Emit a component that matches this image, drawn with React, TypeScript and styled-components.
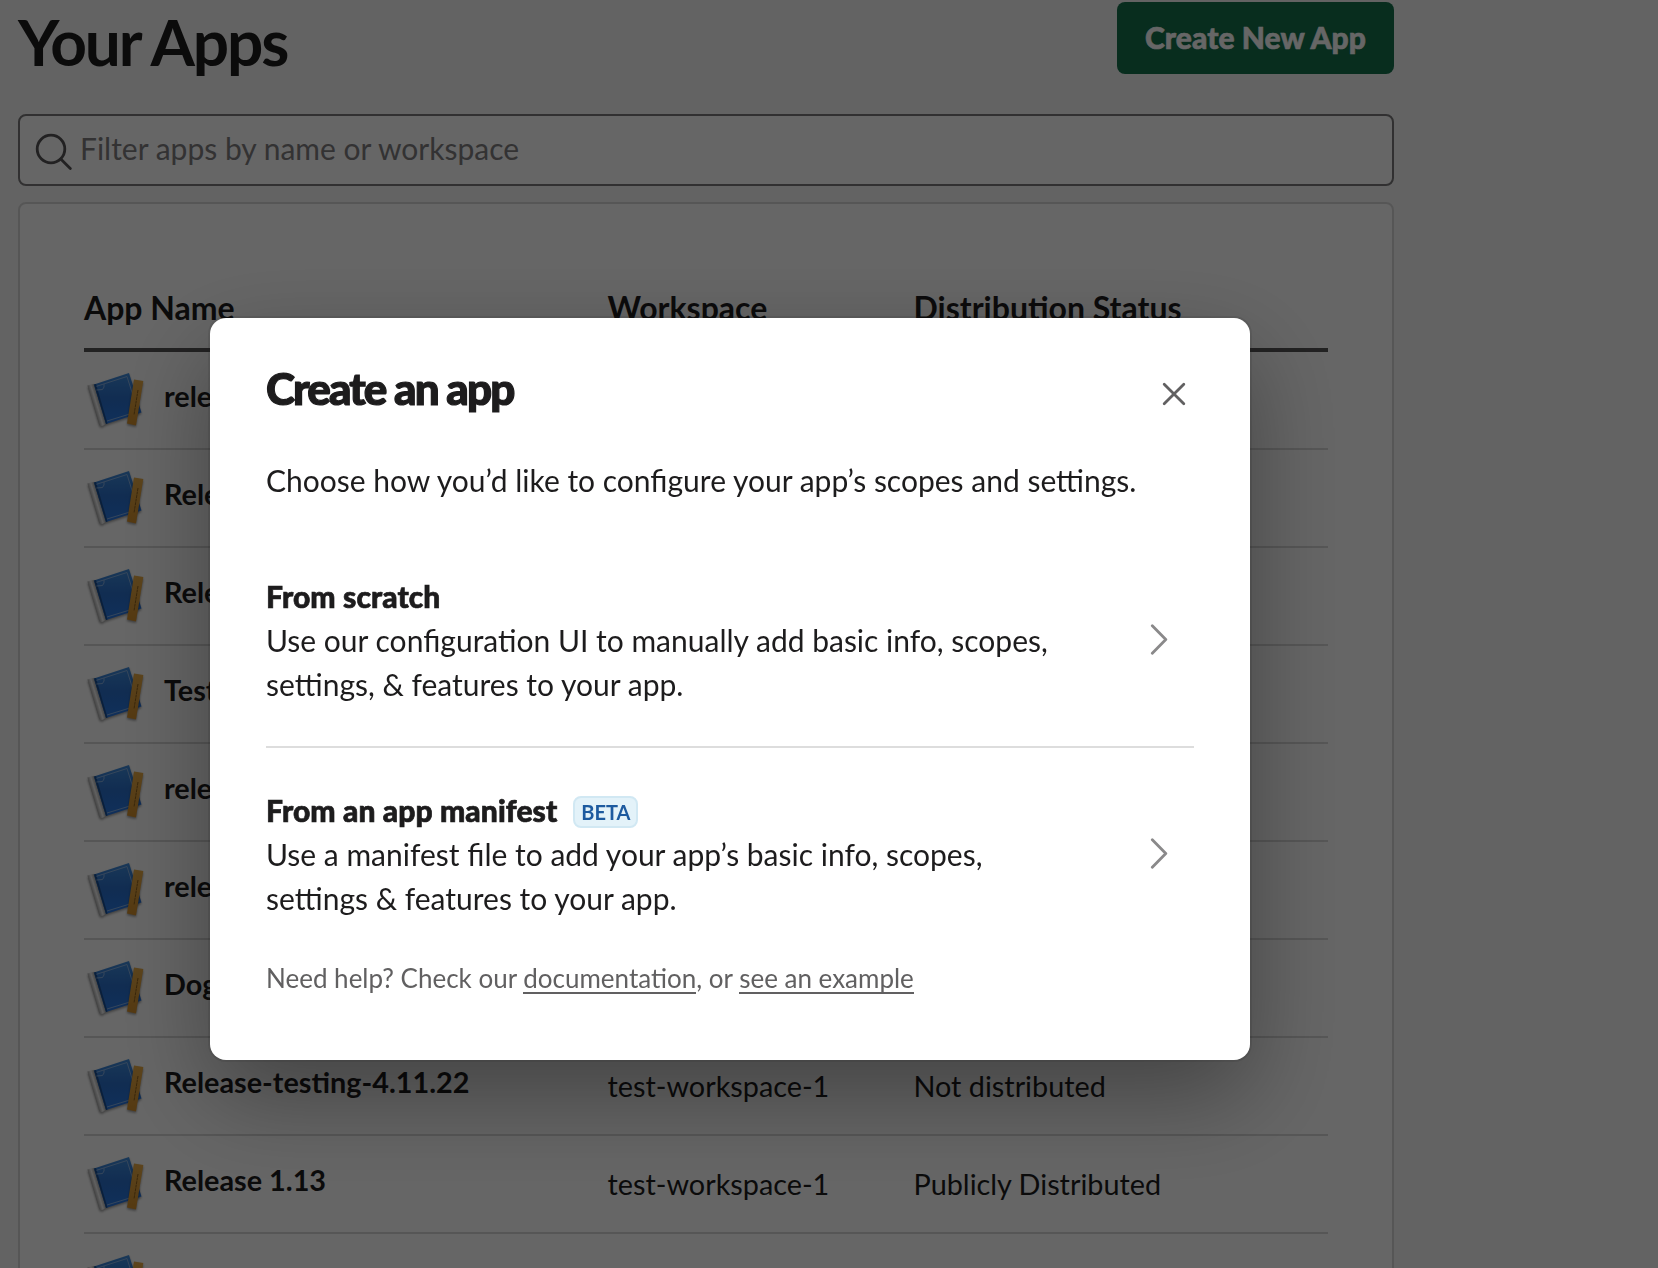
import React from "react";
import styled, { createGlobalStyle } from "styled-components";

const GlobalStyle = createGlobalStyle`
  *, *::before, *::after { box-sizing: border-box; }
  html, body { margin: 0; height: 100%; overflow: hidden; }
  body {
    background: #f8f8f8;
    color: #1d1c1d;
    font-family: Lato, "Liberation Sans", sans-serif;
    font-size: 30px;
    line-height: 44px;
  }
`;

const Page = styled.main`
  width: 1394px;
  height: 1268px;
  overflow: hidden;
  padding: 2px 0 0 18px;
`;

const Header = styled.header`
  display: flex;
  justify-content: space-between;
  align-items: flex-start;
  height: 112px;
`;

const Title = styled.h1`
  margin: 1px 0 0;
  font-size: 64px;
  line-height: 78px;
  font-weight: 700;
  letter-spacing: -2.1px;
`;

const PrimaryButton = styled.button`
  width: 277px;
  height: 72px;
  padding: 0 0 2px;
  border: 0;
  border-radius: 8px;
  background: #14704c;
  color: #fff;
  font: 900 30px Lato, sans-serif;
  letter-spacing: 0.07px;
  -webkit-text-stroke: 0.6px currentColor;
  white-space: nowrap;
`;

const SearchBox = styled.div`
  display: flex;
  align-items: center;
  height: 72px;
  padding-left: 15px;
  border: 2px solid #7a797a;
  border-radius: 8px;
  background: #fff;
`;

const SearchIcon = styled.svg`
  flex: none;
  width: 38px;
  height: 40px;
`;

const SearchInput = styled.input`
  flex: 1;
  margin: 0 0 4px 7px;
  padding: 0;
  border: 0;
  outline: 0;
  background: none;
  font: 400 30px Lato, sans-serif;
  &::placeholder { color: #7f7e7f; opacity: 1; }
`;

const Panel = styled.section`
  margin-top: 16px;
  padding: 64px 64px 0;
  border: 2px solid #d8d8d8;
  border-radius: 8px 8px 0 0;
  background: #fff;
`;

const columns = "523.5px 306px 1fr";

const TableHead = styled.div`
  display: grid;
  grid-template-columns: ${columns};
  height: 84px;
  padding-top: 18px;
  border-bottom: 4px solid #565556;
  font-size: 32px;
  font-weight: 700;
`;

const Row = styled.div`
  display: grid;
  grid-template-columns: ${columns};
  height: 98px;
  border-bottom: 2px solid #d8d8d8;
  font-size: 28.8px;
`;

const NameCell = styled.div`
  display: flex;
  font-weight: 700;
`;

const AppIcon = styled.svg`
  width: 64px;
  height: 64px;
  margin: 16px 16px 0 0;
`;

const AppName = styled.span`
  padding-top: 22px;
  white-space: nowrap;
`;

const Cell = styled.div`
  padding-top: 26px;
  white-space: nowrap;
`;

const Overlay = styled.div`
  position: fixed;
  inset: 0;
  background: rgba(0, 0, 0, 0.6);
  padding: 318px 0 0 210px;
`;

const Dialog = styled.section`
  width: 1040px;
  height: 742px;
  padding: 44px 56px 0;
  border-radius: 16px;
  background: #fff;
  box-shadow: 0 0 0 2px rgba(29, 28, 29, 0.13), 0 36px 96px rgba(0, 0, 0, 0.35);
`;

const DialogHeader = styled.div`
  display: flex;
  justify-content: space-between;
  height: 96px;
`;

const DialogTitle = styled.h2`
  margin: -2px 0 0;
  font-size: 44px;
  line-height: 56px;
  font-weight: 900;
  letter-spacing: -1.88px;
  -webkit-text-stroke: 1.2px currentColor;
`;

const IconButton = styled.button`
  display: flex;
  margin: 19px 7px 0 0;
  padding: 0;
  border: 0;
  background: none;
  align-self: flex-start;
`;

const Intro = styled.p`
  margin: 0 0 72px;
  white-space: nowrap;
`;

const Option = styled.div<{ $divided?: boolean }>`
  display: flex;
  justify-content: space-between;
  align-items: center;
  height: ${(p) => (p.$divided ? 174 : 132)}px;
  padding: 0 26px ${(p) => (p.$divided ? 40 : 0)}px 0;
  border-bottom: ${(p) => (p.$divided ? "2px solid #dddddd" : "0")};
  margin-bottom: ${(p) => (p.$divided ? 40 : 0)}px;
`;

const OptionTitle = styled.div`
  display: flex;
  align-items: center;
  gap: 16px;
  height: 44px;
  font-weight: 900;
  letter-spacing: 0.1px;
  -webkit-text-stroke: 0.7px currentColor;
`;

const OptionText = styled.p`
  margin: 0;
  white-space: nowrap;
`;

const Badge = styled.span`
  width: 65px;
  height: 32px;
  margin-top: 3px;
  border: 2px solid #d1e8f3;
  border-radius: 8px;
  background: #e3f2f9;
  color: #1d5a9f;
  font-size: 20px;
  line-height: 28px;
  font-weight: 700;
  letter-spacing: 0;
  text-align: center;
  -webkit-text-stroke: 0;
`;

const Help = styled.p`
  margin: 38px 0 0;
  color: #616061;
  font-size: 26px;
  line-height: 40px;
  white-space: nowrap;
`;

const HelpLink = styled.a`
  display: inline-block;
  height: 36px;
  border-bottom: 2px solid #616061;
  color: inherit;
`;

const apps = [
  { name: "release-testing", workspace: "test-workspace-1", status: "Not distributed" },
  { name: "Release 4.20", workspace: "test-workspace-1", status: "Not distributed" },
  { name: "Release 4.18", workspace: "test-workspace-1", status: "Not distributed" },
  { name: "Test app", workspace: "test-workspace-1", status: "Not distributed" },
  { name: "release-test-2", workspace: "test-workspace-1", status: "Not distributed" },
  { name: "release-test-1", workspace: "test-workspace-1", status: "Not distributed" },
  { name: "Dog app", workspace: "test-workspace-1", status: "Not distributed" },
  { name: "Release-testing-4.11.22", workspace: "test-workspace-1", status: "Not distributed" },
  { name: "Release 1.13", workspace: "test-workspace-1", status: "Publicly Distributed" },
  { name: "release-10-fri", workspace: "", status: "" },
];

function Blueprint() {
  return (
    <AppIcon viewBox="0 0 64 64">
      <defs>
        <linearGradient id="cover" x1="0" y1="0" x2="0" y2="1">
          <stop offset="0" stopColor="#3f8cdc" />
          <stop offset="0.5" stopColor="#2b70cc" />
          <stop offset="1" stopColor="#2878e4" />
        </linearGradient>
        <linearGradient id="spine" gradientUnits="userSpaceOnUse" x1="9.5" y1="37.500" x2="16" y2="35.500">
          <stop offset="0" stopColor="#a8a8a8" />
          <stop offset="0.5" stopColor="#f2f2f2" />
          <stop offset="1" stopColor="#a8a8a8" />
        </linearGradient>
        <linearGradient id="wood" x1="0" y1="0" x2="0" y2="1">
          <stop offset="0" stopColor="#e6ab48" />
          <stop offset="1" stopColor="#d38f2c" />
        </linearGradient>
        <filter id="soft" x="-30%" y="-30%" width="160%" height="160%" colorInterpolationFilters="sRGB">
          <feDropShadow dx="0" dy="1.5" stdDeviation="1.2" floodOpacity="0.4" />
        </filter>
      </defs>
      <g filter="url(#soft)">
        <path d="M3.5 17.5 10 16 22 56l-4 2.2q-2 .3-3-2z" fill="url(#spine)" />
        <path d="M10 16.5 45 5l12.500 39.500L22 56z" fill="url(#cover)" />
        <path d="M10 16.500l2-.6L23.500 55.500l-1.500.5z" fill="#1b4f92" />
      </g>
      <path d="M12.500 18.300 43 8.500l11 35L23 53M20 16v3l-1.500 2.500-6 .5" fill="none" stroke="#8db6e4" strokeWidth="0.9" />
      <path d="M50 11.500 59.300 13 52 57.500 43 55.500z" fill="url(#wood)" filter="url(#soft)" />
      <path d="M54 22 50 47" stroke="#8f611d" strokeWidth="1" strokeDasharray="3 .6" />
    </AppIcon>
  );
}

function Chevron() {
  return (
    <svg width="18" height="32" viewBox="0 0 18 32" fill="none" stroke="#8a898a" strokeWidth="2.8" strokeLinecap="round" strokeLinejoin="round">
      <path d="M2.300 1.800 15.800 15.500 2.300 29.200" />
    </svg>
  );
}

export default function App() {
  return (
    <>
      <GlobalStyle />
      <Page>
        <Header>
          <Title>Your Apps</Title>
          <PrimaryButton>Create New App</PrimaryButton>
        </Header>
        <SearchBox>
          <SearchIcon viewBox="0 0 38 40" fill="none" stroke="#555455" strokeWidth="2.8" strokeLinecap="round">
            <circle cx="16" cy="19" r="13.800" />
            <path d="M25.800 29 35.300 38.400" />
          </SearchIcon>
          <SearchInput placeholder="Filter apps by name or workspace" />
        </SearchBox>
        <Panel>
          <TableHead>
            <span>App Name</span>
            <span>Workspace</span>
            <span>Distribution Status</span>
          </TableHead>
          {apps.map((app, i) => (
            <Row key={i}>
              <NameCell>
                <Blueprint />
                <AppName>{app.name}</AppName>
              </NameCell>
              <Cell>{app.workspace}</Cell>
              <Cell>{app.status}</Cell>
            </Row>
          ))}
        </Panel>
      </Page>
      <Overlay>
        <Dialog role="dialog">
          <DialogHeader>
            <DialogTitle>Create an app</DialogTitle>
            <IconButton aria-label="Close">
              <svg width="26" height="26" viewBox="0 0 26 26" stroke="#616061" strokeWidth="2.800" strokeLinecap="round">
                <path d="M3.200 3.200 22.800 22.800M22.800 3.200 3.200 22.800" />
              </svg>
            </IconButton>
          </DialogHeader>
          <Intro>Choose how you’d like to configure your app’s scopes and settings.</Intro>
          <Option $divided>
            <div>
              <OptionTitle>From scratch</OptionTitle>
              <OptionText>
                Use our configuration UI to manually add basic info, scopes,
                <br />
                settings, &amp; features to your app.
              </OptionText>
            </div>
            <Chevron />
          </Option>
          <Option>
            <div>
              <OptionTitle>
                From an app manifest <Badge>BETA</Badge>
              </OptionTitle>
              <OptionText>
                Use a manifest file to add your app’s basic info, scopes,
                <br />
                settings &amp; features to your app.
              </OptionText>
            </div>
            <Chevron />
          </Option>
          <Help>
            Need help? Check our <HelpLink>documentation</HelpLink>, or <HelpLink>see an example</HelpLink>
          </Help>
        </Dialog>
      </Overlay>
    </>
  );
}
